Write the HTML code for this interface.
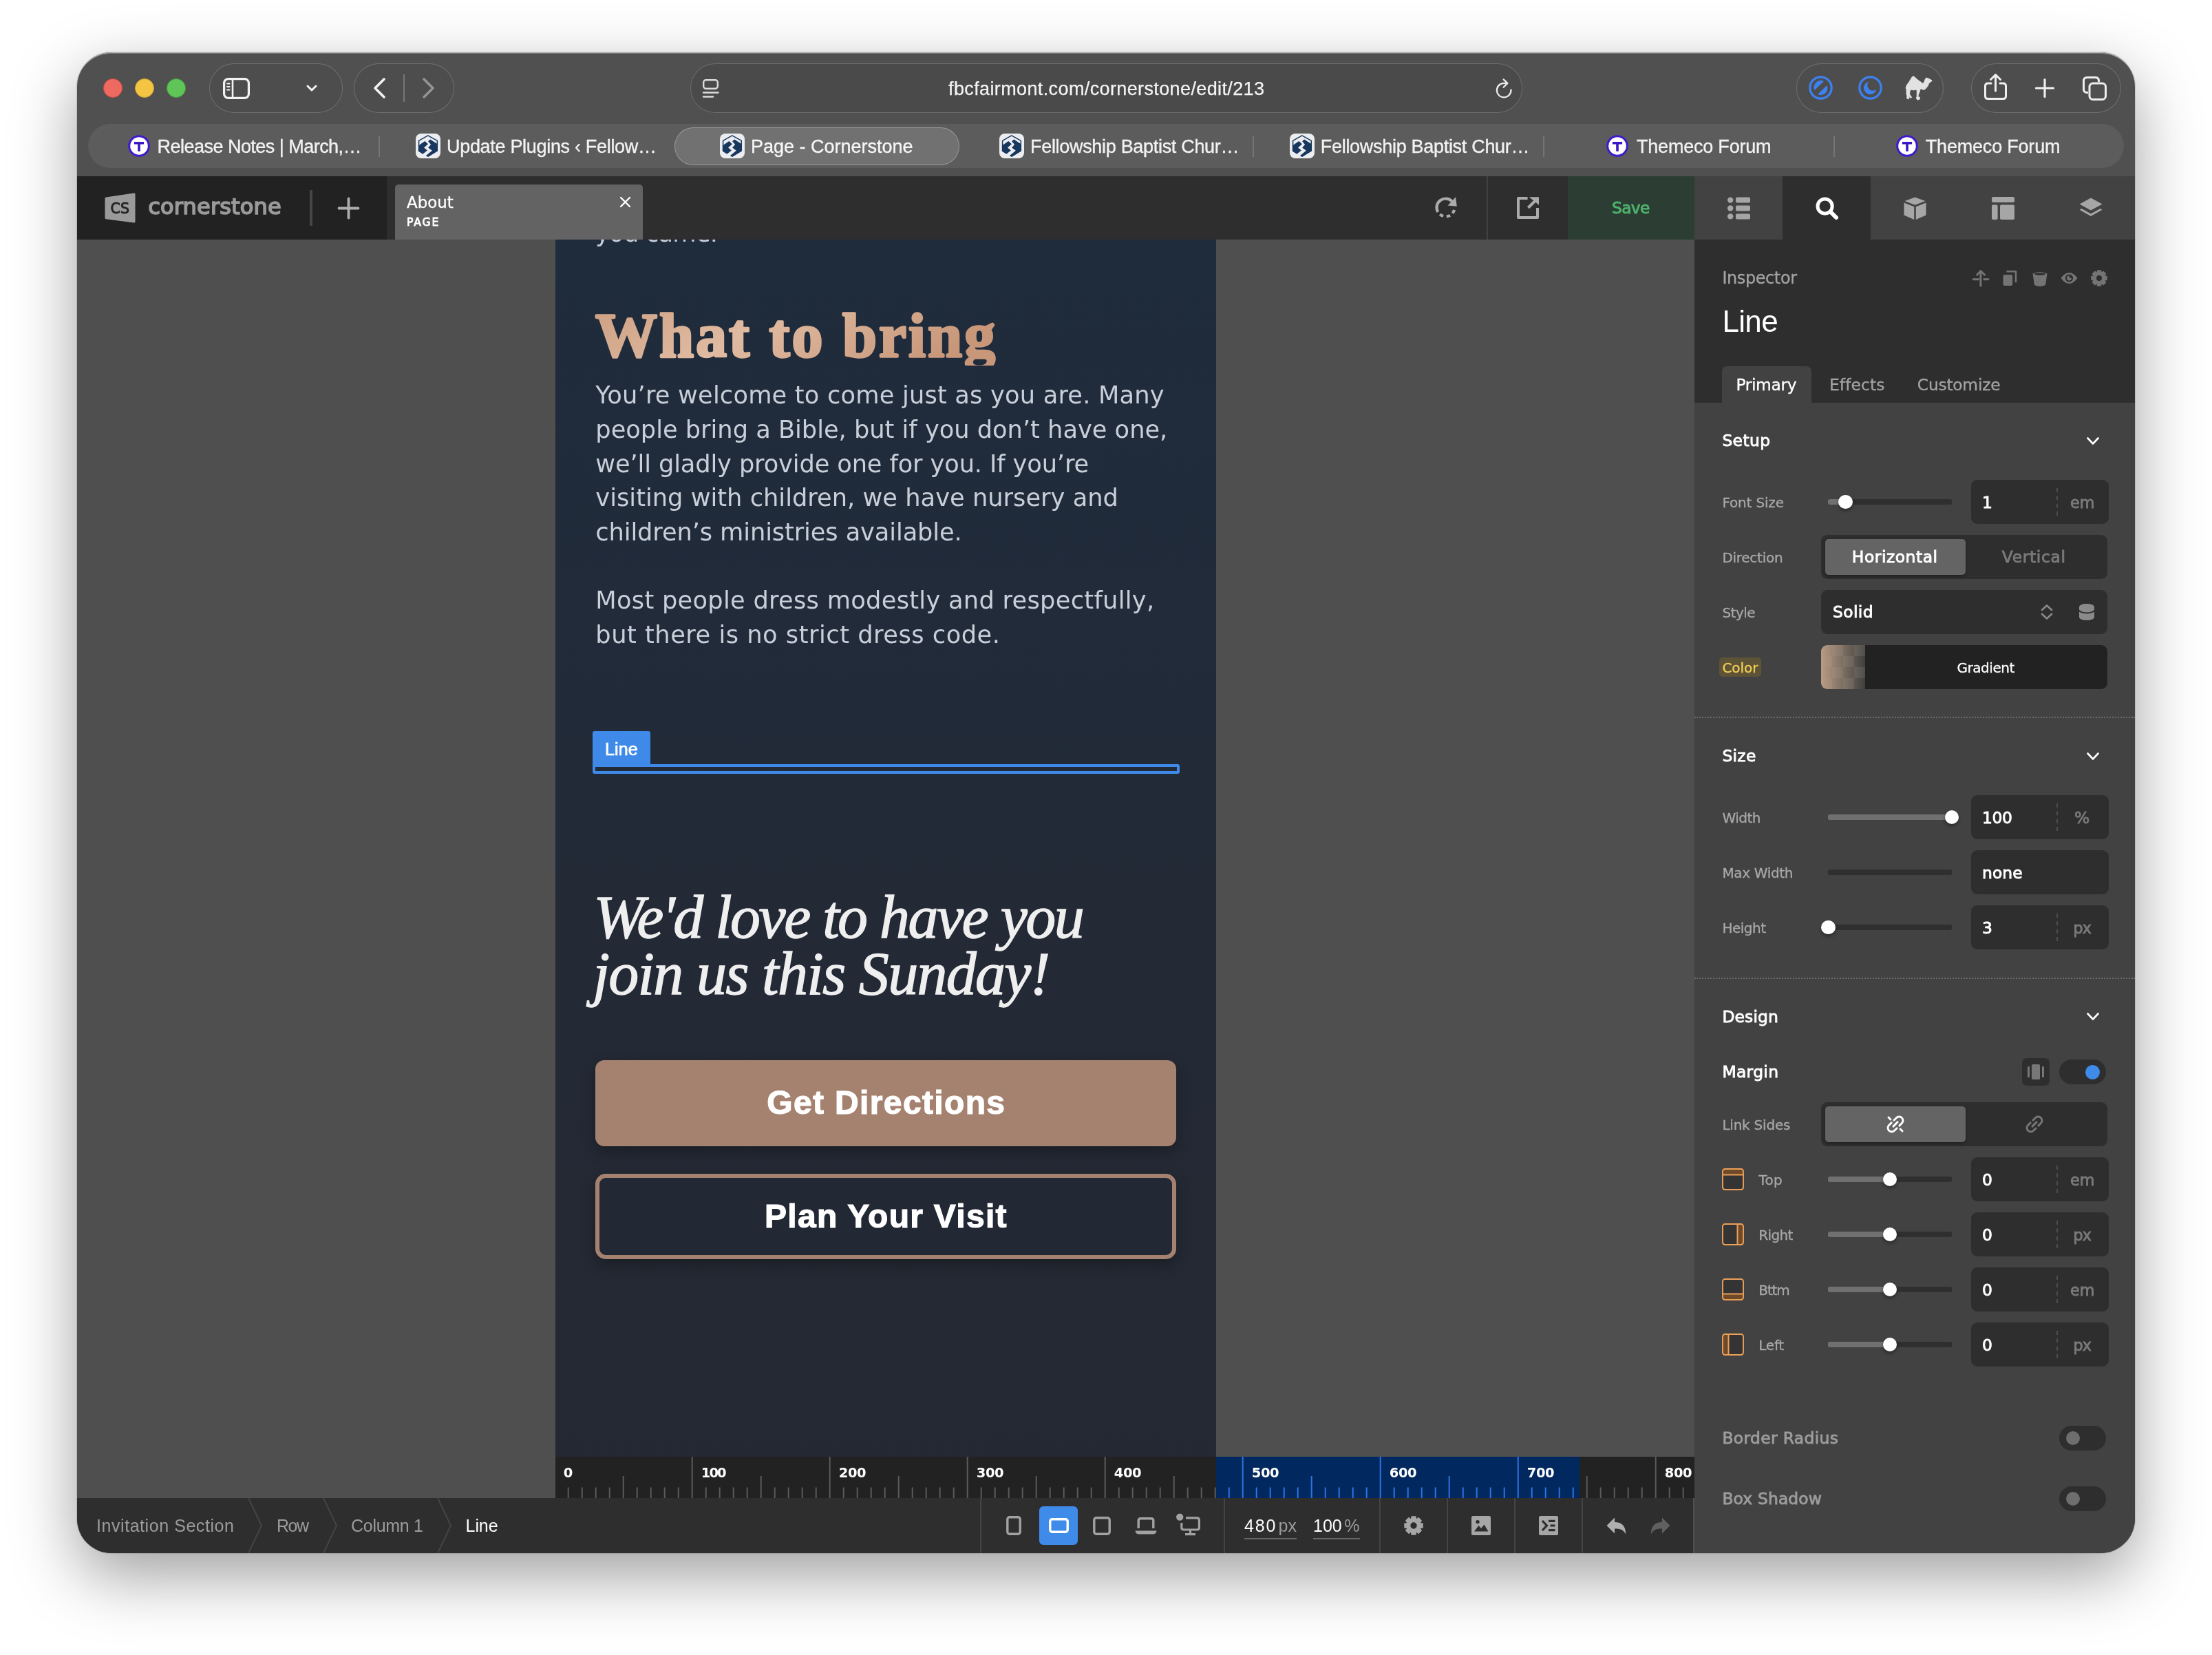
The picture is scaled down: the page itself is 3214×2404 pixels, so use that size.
<!DOCTYPE html>
<html lang="en"><head><meta charset="utf-8"><title>Page - Cornerstone</title>
<style>
html,body{margin:0;padding:0;background:#fff;}
body{width:3214px;height:2404px;position:relative;overflow:hidden;font-family:'Liberation Sans',sans-serif;}
.a{position:absolute;box-sizing:border-box;}
.t{position:absolute;white-space:pre;line-height:1;}
#shadow{position:absolute;left:112px;top:76px;width:2990px;height:2180px;border-radius:50px;box-shadow:0 33px 94px rgba(0,0,0,0.38),0 0 2px rgba(0,0,0,0.4);}
#win{position:absolute;left:112px;top:76px;width:2990px;height:2180px;border-radius:50px;overflow:hidden;background:#505050;}
#o{will-change:transform;position:absolute;left:-112px;top:-76px;width:3214px;height:2404px;}
svg{overflow:visible;}
#edge,#edge2{position:absolute;left:112px;top:76px;width:2990px;height:400px;border-radius:50px 50px 0 0;border-top:1px solid rgba(225,225,225,0.68);box-sizing:border-box;pointer-events:none;}
#edge2{top:77px;border-top-color:rgba(225,225,225,0.28);border-radius:49px 49px 0 0;}
</style></head><body>
<div id="shadow"></div>
<div id="win"><div id="o">
<div class="a" style="left:112.0px;top:76.0px;width:2990.0px;height:180.0px;background:#505050;"></div>
<div class="a" style="left:150.0px;top:113.8px;width:28.4px;height:28.4px;background:#ee6a60;border-radius:50%;border:1px solid #d24e45;"></div>
<div class="a" style="left:196.0px;top:113.8px;width:28.4px;height:28.4px;background:#f4c443;border-radius:50%;border:1px solid #d2a233;"></div>
<div class="a" style="left:242.0px;top:113.8px;width:28.4px;height:28.4px;background:#5fc556;border-radius:50%;border:1px solid #45a341;"></div>
<div class="a" style="left:304.0px;top:92.0px;width:194.0px;height:71.5px;border-radius:36px;border:1.5px solid rgba(255,255,255,0.19);background:rgba(0,0,0,0.035);"></div>
<div class="a" style="left:514.0px;top:92.0px;width:146.0px;height:71.5px;border-radius:36px;border:1.5px solid rgba(255,255,255,0.19);background:rgba(0,0,0,0.035);"></div>
<div class="a" style="left:1002.5px;top:92.0px;width:1209.5px;height:71.5px;border-radius:36px;border:1.5px solid rgba(255,255,255,0.19);background:#4a4a4a;"></div>
<div class="a" style="left:2610.0px;top:92.0px;width:214.0px;height:71.5px;border-radius:36px;border:1.5px solid rgba(255,255,255,0.19);background:rgba(0,0,0,0.035);"></div>
<div class="a" style="left:2864.0px;top:92.0px;width:218.0px;height:71.5px;border-radius:36px;border:1.5px solid rgba(255,255,255,0.19);background:rgba(0,0,0,0.035);"></div>
<svg class="a" style="left:324.0px;top:112.5px;" width="39" height="31" viewBox="0 0 39 31"><rect x="1.6" y="1.6" width="35.8" height="27.8" rx="6" fill="none" stroke="#f2f2f2" stroke-width="3.2"/><line x1="14" y1="2" x2="14" y2="29" stroke="#f2f2f2" stroke-width="2.6"/><g stroke="#f2f2f2" stroke-width="2" stroke-linecap="round"><line x1="6" y1="8.5" x2="9.5" y2="8.5"/><line x1="6" y1="13" x2="9.5" y2="13"/><line x1="6" y1="17.5" x2="9.5" y2="17.5"/></g></svg>
<svg class="a" style="left:445.0px;top:122.0px;" width="16" height="12" viewBox="0 0 16 12"><path d="M2 3 L8 9 L14 3" fill="none" stroke="#f2f2f2" stroke-width="3" stroke-linecap="round" stroke-linejoin="round"/></svg>
<svg class="a" style="left:541.0px;top:112.0px;" width="20" height="32" viewBox="0 0 20 32"><path d="M17 3 L4 16 L17 29" fill="none" stroke="#f4f4f4" stroke-width="3.6" stroke-linecap="round" stroke-linejoin="round"/></svg>
<div class="a" style="left:586.3px;top:108.0px;width:1.6px;height:40.0px;background:#777;"></div>
<svg class="a" style="left:613.0px;top:112.0px;" width="20" height="32" viewBox="0 0 20 32"><path d="M3 3 L16 16 L3 29" fill="none" stroke="#949494" stroke-width="3.6" stroke-linecap="round" stroke-linejoin="round"/></svg>
<svg class="a" style="left:1021.0px;top:115.0px;" width="24" height="28" viewBox="0 0 24 28"><rect x="1.2" y="1.2" width="20.6" height="12.6" rx="3.5" fill="none" stroke="#dcdcdc" stroke-width="2.4"/><line x1="1" y1="19.5" x2="22.5" y2="19.5" stroke="#dcdcdc" stroke-width="2.4" stroke-linecap="round"/><line x1="1" y1="25.5" x2="15" y2="25.5" stroke="#dcdcdc" stroke-width="2.4" stroke-linecap="round"/></svg>
<span class="t" style="left:1378.0px;top:115.8px;font-size:27px;color:#f4f4f4;letter-spacing:0.38px;-webkit-text-stroke:0.25px #f4f4f4;">fbcfairmont.com/cornerstone/edit/213</span>
<svg class="a" style="left:2172.0px;top:108.0px;" width="28" height="36" viewBox="0 0 28 36"><path d="M23.47 22.38 A10.3 10.3 0 1 1 15.87 13.15" fill="none" stroke="#ededed" stroke-width="2.25" stroke-linecap="round"/><path d="M12.6 7.4 L18.4 12.9 L12.6 18.8" fill="none" stroke="#ededed" stroke-width="2.25" stroke-linecap="round" stroke-linejoin="round"/></svg>
<svg class="a" style="left:2628.2px;top:110.2px;" width="35" height="35" viewBox="0 0 35 35"><circle cx="17.5" cy="17.5" r="15.7" fill="none" stroke="#3d82f3" stroke-width="3.2"/><path d="M8.5 21 A10 10 0 0 1 22 8 Z" fill="#3d82f3"/><path d="M26.5 14 A10 10 0 0 1 13 27 Z" fill="#3d82f3"/></svg>
<svg class="a" style="left:2699.5px;top:110.2px;" width="35" height="35" viewBox="0 0 35 35"><circle cx="17.5" cy="17.5" r="15.7" fill="none" stroke="#3d82f3" stroke-width="3.2"/><path d="M15.5 8.5 A9.3 9.3 0 1 0 26.5 19.5 A7.6 7.6 0 0 1 15.5 8.5 Z" fill="#3d82f3"/></svg>
<svg class="a" style="left:2755.0px;top:100.0px;" width="70" height="55" viewBox="0 0 70 55"><polygon points="24.9,10.8 27,11.8 29.2,14.0 33.2,17.3 36.5,19.5 39.2,21.6 40.9,18.6 42.5,14.3 44.5,13.0 48,14.6 51.8,16.6 52.2,17.6 49.9,18.9 47.5,21.6 45.9,25.3 42.9,28.9 39.9,30.6 36.2,28.9 34.9,29.9 34.2,33.2 32.9,36.6 31.9,39.9 34.6,41.5 34.2,44.2 31.2,45.2 29.2,43.2 30.2,39.9 30.2,33.2 29.9,30.2 25.3,30.9 21.3,30.1 19.9,33.2 19.6,36.6 21.6,39.9 22.9,41.5 20.6,42.2 17.9,39.2 17.3,37.6 18.9,42.2 17.9,44.2 15.3,42.5 16,39.9 15,36.6 15,29.9 14,27.9 15.6,23.3 18.6,19.3 21.3,15 23.3,11.6" fill="#e2e2e2" stroke="#e2e2e2" stroke-width="0.8" stroke-linejoin="round"/></svg>
<svg class="a" style="left:2880.0px;top:106.0px;" width="40" height="42" viewBox="0 0 40 42"><path d="M13 15 H8.5 Q4.5 15 4.5 19 V33.5 Q4.5 37.5 8.5 37.5 H30.5 Q34.5 37.5 34.5 33.5 V19 Q34.5 15 30.5 15 H26" fill="none" stroke="#efefef" stroke-width="3" stroke-linecap="round"/><path d="M19.5 26 V3.5 M12.5 9.5 L19.5 2.5 L26.5 9.5" fill="none" stroke="#efefef" stroke-width="3" stroke-linecap="round" stroke-linejoin="round"/></svg>
<svg class="a" style="left:2956.6px;top:113.7px;" width="28" height="28" viewBox="0 0 28 28"><path d="M14 1.5 V26.5 M1.5 14 H26.5" stroke="#efefef" stroke-width="3.2" stroke-linecap="round"/></svg>
<svg class="a" style="left:3026.0px;top:110.5px;" width="35" height="35" viewBox="0 0 35 35"><path d="M8 23.5 H6.5 Q1.5 23.5 1.5 18.5 V6.5 Q1.5 1.5 6.5 1.5 H18.5 Q23.5 1.5 23.5 6.5 V8" fill="none" stroke="#efefef" stroke-width="3"/><rect x="10" y="10" width="23.5" height="23.5" rx="5" fill="#505050" stroke="#efefef" stroke-width="3"/></svg>
<div class="a" style="left:128.0px;top:180.0px;width:2958.0px;height:64.0px;background:#5c5c5c;border-radius:32px;"></div>
<div class="a" style="left:980.0px;top:184.5px;width:414.0px;height:55.0px;background:#717171;border-radius:28px;border:1.5px solid rgba(255,255,255,0.28);"></div>
<div class="a" style="left:550.0px;top:197.0px;width:2.0px;height:30.5px;background:#757575;"></div>
<div class="a" style="left:1820.0px;top:197.0px;width:2.0px;height:30.5px;background:#757575;"></div>
<div class="a" style="left:2242.2px;top:197.0px;width:2.0px;height:30.5px;background:#757575;"></div>
<div class="a" style="left:2664.0px;top:197.0px;width:2.0px;height:30.5px;background:#757575;"></div>
<svg class="a" style="left:185.5px;top:196.0px;" width="32" height="32" viewBox="0 0 32 32"><circle cx="16" cy="16" r="14.3" fill="#fff" stroke="#3f1bcc" stroke-width="3"/><rect x="8.9" y="10" width="14.2" height="3.5" fill="#3a16c4"/><rect x="14.2" y="10" width="3.6" height="13.8" fill="#3a16c4"/></svg>
<span class="t" style="left:228.6px;top:200.0px;font-size:27px;color:#f2f2f2;letter-spacing:-0.53px;-webkit-text-stroke:0.35px #f2f2f2;">Release Notes | March,…</span>
<svg class="a" style="left:604.0px;top:194.0px;" width="36" height="36" viewBox="0 0 36 36"><rect x="0" y="0" width="36" height="36" rx="8" fill="#ecedf0"/><path d="M4.6 25.5 V10.4 L17.8 2.9 L31.3 10.4 V25.5" fill="none" stroke="#17375e" stroke-width="1.5" stroke-linejoin="round"/><polygon points="3.9,17.4 13.3,10.9 17.9,15.3 12.1,20.5 16.9,24.6 10.3,29.8 3.9,25.8" fill="#17375e"/><polygon points="21.1,8.5 32,15.6 32,25.5 18.1,34 14.8,32.2 23.9,24.8 18.1,20.4 22.1,15.9 18.1,11.3" fill="#17375e"/></svg>
<span class="t" style="left:649.0px;top:200.0px;font-size:27px;color:#f2f2f2;letter-spacing:-0.31px;-webkit-text-stroke:0.35px #f2f2f2;">Update Plugins ‹ Fellow…</span>
<svg class="a" style="left:1046.0px;top:194.0px;" width="36" height="36" viewBox="0 0 36 36"><rect x="0" y="0" width="36" height="36" rx="8" fill="#ecedf0"/><path d="M4.6 25.5 V10.4 L17.8 2.9 L31.3 10.4 V25.5" fill="none" stroke="#17375e" stroke-width="1.5" stroke-linejoin="round"/><polygon points="3.9,17.4 13.3,10.9 17.9,15.3 12.1,20.5 16.9,24.6 10.3,29.8 3.9,25.8" fill="#17375e"/><polygon points="21.1,8.5 32,15.6 32,25.5 18.1,34 14.8,32.2 23.9,24.8 18.1,20.4 22.1,15.9 18.1,11.3" fill="#17375e"/></svg>
<span class="t" style="left:1091.0px;top:200.0px;font-size:27px;color:#f7f7f7;letter-spacing:-0.01px;-webkit-text-stroke:0.35px #f2f2f2;">Page - Cornerstone</span>
<svg class="a" style="left:1452.0px;top:194.0px;" width="36" height="36" viewBox="0 0 36 36"><rect x="0" y="0" width="36" height="36" rx="8" fill="#ecedf0"/><path d="M4.6 25.5 V10.4 L17.8 2.9 L31.3 10.4 V25.5" fill="none" stroke="#17375e" stroke-width="1.5" stroke-linejoin="round"/><polygon points="3.9,17.4 13.3,10.9 17.9,15.3 12.1,20.5 16.9,24.6 10.3,29.8 3.9,25.8" fill="#17375e"/><polygon points="21.1,8.5 32,15.6 32,25.5 18.1,34 14.8,32.2 23.9,24.8 18.1,20.4 22.1,15.9 18.1,11.3" fill="#17375e"/></svg>
<span class="t" style="left:1497.0px;top:200.0px;font-size:27px;color:#f2f2f2;letter-spacing:-0.31px;-webkit-text-stroke:0.35px #f2f2f2;">Fellowship Baptist Chur…</span>
<svg class="a" style="left:1874.0px;top:194.0px;" width="36" height="36" viewBox="0 0 36 36"><rect x="0" y="0" width="36" height="36" rx="8" fill="#ecedf0"/><path d="M4.6 25.5 V10.4 L17.8 2.9 L31.3 10.4 V25.5" fill="none" stroke="#17375e" stroke-width="1.5" stroke-linejoin="round"/><polygon points="3.9,17.4 13.3,10.9 17.9,15.3 12.1,20.5 16.9,24.6 10.3,29.8 3.9,25.8" fill="#17375e"/><polygon points="21.1,8.5 32,15.6 32,25.5 18.1,34 14.8,32.2 23.9,24.8 18.1,20.4 22.1,15.9 18.1,11.3" fill="#17375e"/></svg>
<span class="t" style="left:1918.8px;top:200.0px;font-size:27px;color:#f2f2f2;letter-spacing:-0.30px;-webkit-text-stroke:0.35px #f2f2f2;">Fellowship Baptist Chur…</span>
<svg class="a" style="left:2334.3px;top:196.0px;" width="32" height="32" viewBox="0 0 32 32"><circle cx="16" cy="16" r="14.3" fill="#fff" stroke="#3f1bcc" stroke-width="3"/><rect x="8.9" y="10" width="14.2" height="3.5" fill="#3a16c4"/><rect x="14.2" y="10" width="3.6" height="13.8" fill="#3a16c4"/></svg>
<span class="t" style="left:2378.0px;top:200.0px;font-size:27px;color:#f2f2f2;letter-spacing:-0.21px;-webkit-text-stroke:0.35px #f2f2f2;">Themeco Forum</span>
<svg class="a" style="left:2754.7px;top:196.0px;" width="32" height="32" viewBox="0 0 32 32"><circle cx="16" cy="16" r="14.3" fill="#fff" stroke="#3f1bcc" stroke-width="3"/><rect x="8.9" y="10" width="14.2" height="3.5" fill="#3a16c4"/><rect x="14.2" y="10" width="3.6" height="13.8" fill="#3a16c4"/></svg>
<span class="t" style="left:2797.8px;top:200.0px;font-size:27px;color:#f2f2f2;letter-spacing:-0.20px;-webkit-text-stroke:0.35px #f2f2f2;">Themeco Forum</span>
<div class="a" style="left:112.0px;top:256.0px;width:450.0px;height:92.0px;background:#222222;"></div>
<div class="a" style="left:562.0px;top:256.0px;width:1900.0px;height:92.0px;background:#2e2e2e;"></div>
<svg class="a" style="left:151.5px;top:280.0px;" width="45" height="44" viewBox="0 0 45 44"><path d="M2 6.5 Q0.5 6.8 0.5 8.5 V36.5 Q0.5 38 2 38.3 L42.5 43.6 Q44.5 43.8 44.5 42 V2 Q44.5 0.2 42.5 0.5 Z" fill="#9a9a9a"/></svg>
<span class="t" style="left:160.6px;top:292.8px;font-size:20.5px;color:#242424;font-family:'DejaVu Sans','Liberation Sans',sans-serif;letter-spacing:0.07px;-webkit-text-stroke:0.9px #242424;">CS</span>
<span class="t" style="left:215.3px;top:284.2px;font-size:32px;color:#9a9a9a;font-family:'DejaVu Sans','Liberation Sans',sans-serif;letter-spacing:0.18px;-webkit-text-stroke:1.7px #9a9a9a;">cornerstone</span>
<div class="a" style="left:449.7px;top:276.0px;width:4.0px;height:52.0px;background:#464646;"></div>
<svg class="a" style="left:490.5px;top:286.5px;" width="31" height="31" viewBox="0 0 31 31"><path d="M15.5 1.5 V29.5 M1.5 15.5 H29.5" stroke="#adadad" stroke-width="3.8" stroke-linecap="round"/></svg>
<div class="a" style="left:574.0px;top:268.0px;width:360.0px;height:80.0px;background:#636363;border-radius:5px 5px 0 0;"></div>
<span class="t" style="left:591.0px;top:282.6px;font-size:22.91px;color:#ffffff;font-family:'DejaVu Sans','Liberation Sans',sans-serif;letter-spacing:-0.01px;-webkit-text-stroke:0.3px #ffffff;">About</span>
<span class="t" style="left:591.0px;top:316.4px;font-size:15.6px;color:#ffffff;font-family:'DejaVu Sans','Liberation Sans',sans-serif;letter-spacing:1.85px;-webkit-text-stroke:0.85px #ffffff;">PAGE</span>
<svg class="a" style="left:899.7px;top:284.8px;" width="17" height="17" viewBox="0 0 17 17"><path d="M2 2 L15 15 M15 2 L2 15" stroke="#fff" stroke-width="2.4" stroke-linecap="round"/></svg>
<svg class="a" style="left:2083.7px;top:285.1px;" width="33" height="33" viewBox="0 0 33 33"><path d="M5.24 23.00 A13 13 0 0 1 26.16 7.80" fill="none" stroke="#ababab" stroke-width="4.2"/><polygon points="31,1.2 32.8,14.7 19.7,13.4" fill="#ababab"/><path d="M29.06 19.86 A13 13 0 0 1 5.24 23.00" fill="none" stroke="#ababab" stroke-width="4.2" stroke-dasharray="5.5 4.7"/></svg>
<div class="a" style="left:2160.0px;top:256.0px;width:2.0px;height:92.0px;background:#414141;"></div>
<svg class="a" style="left:2204.0px;top:286.0px;" width="32" height="32" viewBox="0 0 32 32"><path d="M15.6 2 H2 V30 H30 V16" fill="none" stroke="#ababab" stroke-width="4" stroke-linejoin="round"/><polygon points="17.8,0.2 32,0.2 32,11.8" fill="#ababab"/><path d="M28 4.2 L16.4 15.8" stroke="#ababab" stroke-width="4.2"/></svg>
<div class="a" style="left:2277.6px;top:256.0px;width:184.4px;height:92.0px;background:#2c3e33;"></div>
<span class="t" style="left:2342.0px;top:290.5px;font-size:23.4px;color:#4fb26d;font-family:'DejaVu Sans','Liberation Sans',sans-serif;letter-spacing:-0.71px;-webkit-text-stroke:0.85px #4fb26d;">Save</span>
<div class="a" style="left:2462.0px;top:256.0px;width:640.0px;height:92.0px;background:#424242;"></div>
<div class="a" style="left:2590.0px;top:256.0px;width:128.0px;height:92.0px;background:#2e2e2e;"></div>
<svg class="a" style="left:2509.5px;top:286.0px;" width="33" height="33" viewBox="0 0 33 33"><g fill="#a6a6a6"><circle cx="4.2" cy="4.6" r="4.2"/><circle cx="4.2" cy="16.5" r="4.2"/><circle cx="4.2" cy="28.4" r="4.2"/><rect x="12" y="0.6" width="21" height="8" rx="2"/><rect x="12" y="12.5" width="21" height="8" rx="2"/><rect x="12" y="24.4" width="21" height="8" rx="2"/></g></svg>
<svg class="a" style="left:2637.5px;top:286.0px;" width="33" height="33" viewBox="0 0 33 33"><circle cx="13.6" cy="13.6" r="10.6" fill="none" stroke="#fff" stroke-width="5"/><path d="M21.5 21.5 L30 30" stroke="#fff" stroke-width="6" stroke-linecap="round"/></svg>
<svg class="a" style="left:2765.5px;top:285.5px;" width="33" height="34" viewBox="0 0 33 34"><g fill="#a6a6a6"><path d="M16.5 0.5 L31.5 6 L16.5 11.8 L1.5 6 Z"/><path d="M0.5 8.4 L15.2 14.2 V33 L0.5 26.6 Z"/><path d="M32.5 8.4 L17.8 14.2 V33 L32.5 26.6 Z"/></g></svg>
<svg class="a" style="left:2893.5px;top:286.0px;" width="33" height="33" viewBox="0 0 33 33"><g fill="#a6a6a6"><rect x="0" y="0" width="33" height="8" rx="2"/><rect x="0" y="11.5" width="8.6" height="21.5" rx="2"/><rect x="12" y="11.5" width="21" height="21.5" rx="2"/></g></svg>
<svg class="a" style="left:3021.0px;top:287.0px;" width="34" height="30" viewBox="0 0 34 30"><path d="M17 0.5 L33.5 9.5 L17 18.5 L0.5 9.5 Z" fill="#a6a6a6"/><path d="M3.5 16 L0.5 17.8 L17 27 L33.5 17.8 L30.5 16 L17 23.4 Z" fill="#a6a6a6"/></svg>
<div class="a" style="left:112.0px;top:348.0px;width:2350.0px;height:1828.0px;background:#4f4f4f;"></div>
<div class="a" style="left:807.0px;top:348.0px;width:960.0px;height:1768.0px;background:linear-gradient(180deg,#1f2c3c 0%,#212b3a 30%,#232a36 55%,#242832 100%);"></div>
<div class="a" style="left:807px;top:348px;width:960px;height:40px;overflow:hidden;">
<span class="t" style="left:58.0px;top:-26.7px;font-size:35.2px;color:#c9cfd9;font-family:'DejaVu Sans','Liberation Sans',sans-serif;letter-spacing:-0.73px;">you came.</span>
</div>
<svg class="a" style="left:854.5px;top:427.5px;overflow:hidden" width="621" height="103.0"><defs><linearGradient id="hg" x1="0" x2="1" y1="0" y2="0.25"><stop offset="0" stop-color="#cd9f82"/><stop offset="0.45" stop-color="#e0bba1"/><stop offset="1" stop-color="#c8977a"/></linearGradient></defs><text x="10" y="90" font-family="Liberation Serif,serif" font-size="90" font-weight="700" font-style="normal" letter-spacing="2.99" fill="url(#hg)" stroke="url(#hg)" stroke-width="3.4" stroke-linejoin="round">What to bring</text></svg>
<span class="t" style="left:865.3px;top:556.0px;font-size:35.2px;color:#c9cfd9;font-family:'DejaVu Sans','Liberation Sans',sans-serif;letter-spacing:0.20px;">You’re welcome to come just as you are. Many</span>
<span class="t" style="left:865.3px;top:605.8px;font-size:35.2px;color:#c9cfd9;font-family:'DejaVu Sans','Liberation Sans',sans-serif;">people bring a Bible, but if you don’t have one,</span>
<span class="t" style="left:865.3px;top:655.5px;font-size:35.2px;color:#c9cfd9;font-family:'DejaVu Sans','Liberation Sans',sans-serif;letter-spacing:-0.12px;">we’ll gladly provide one for you. If you’re</span>
<span class="t" style="left:865.3px;top:705.2px;font-size:35.2px;color:#c9cfd9;font-family:'DejaVu Sans','Liberation Sans',sans-serif;letter-spacing:0.03px;">visiting with children, we have nursery and</span>
<span class="t" style="left:865.3px;top:755.0px;font-size:35.2px;color:#c9cfd9;font-family:'DejaVu Sans','Liberation Sans',sans-serif;letter-spacing:-0.10px;">children’s ministries available.</span>
<span class="t" style="left:865.3px;top:854.4px;font-size:35.2px;color:#c9cfd9;font-family:'DejaVu Sans','Liberation Sans',sans-serif;letter-spacing:0.29px;">Most people dress modestly and respectfully,</span>
<span class="t" style="left:865.3px;top:904.2px;font-size:35.2px;color:#c9cfd9;font-family:'DejaVu Sans','Liberation Sans',sans-serif;letter-spacing:0.52px;">but there is no strict dress code.</span>
<div class="a" style="left:861.0px;top:1062.0px;width:84.0px;height:50.0px;background:#3f8ae8;border-radius:3px 3px 0 0;"></div>
<span class="t" style="left:879.0px;top:1075.5px;font-size:25px;color:#fff;letter-spacing:0.11px;-webkit-text-stroke:0.7px #fff;">Line</span>
<div class="a" style="left:861.0px;top:1110.0px;width:852.5px;height:14.0px;border-radius:3px;border:4px solid #3f8ae8;"></div>
<span class="t" style="left:862.6px;top:1289.0px;font-size:88px;color:#efefef;font-family:'Liberation Serif',serif;font-style:italic;letter-spacing:-2.51px;-webkit-text-stroke:1.3px #efefef;">We&#x27;d love to have you</span>
<span class="t" style="left:861.5px;top:1371.3px;font-size:88px;color:#efefef;font-family:'Liberation Serif',serif;font-style:italic;letter-spacing:-1.69px;-webkit-text-stroke:1.3px #efefef;">join us this Sunday!</span>
<div class="a" style="left:865.3px;top:1540.0px;width:843.4px;height:124.7px;background:#a5826f;border-radius:13px;box-shadow:0 8px 20px rgba(0,0,0,0.28);"></div>
<span class="t" style="left:1114.3px;top:1578.0px;font-size:48px;color:#fff;font-weight:700;letter-spacing:1.36px;-webkit-text-stroke:1.2px #fff;">Get Directions</span>
<div class="a" style="left:865.3px;top:1705.0px;width:843.4px;height:123.6px;background:#222935;border-radius:15px;border:6px solid #a5826f;box-shadow:0 8px 20px rgba(0,0,0,0.28);"></div>
<span class="t" style="left:1111.0px;top:1743.4px;font-size:48px;color:#fff;font-weight:700;letter-spacing:1.29px;-webkit-text-stroke:1.2px #fff;">Plan Your Visit</span>
<div class="a" style="left:807.0px;top:2116.0px;width:1655.0px;height:60.0px;background:#222222;"></div>
<div class="a" style="left:1767.0px;top:2116.0px;width:528.3px;height:60.0px;background:#01285f;"></div>
<svg class="a" style="left:807.0px;top:2116.0px;" width="1655" height="60" viewBox="0 0 1655 60"><rect x="17.7" y="44.5" width="2" height="15.5" fill="#5a5a5a"/><rect x="37.7" y="44.5" width="2" height="15.5" fill="#5a5a5a"/><rect x="57.7" y="44.5" width="2" height="15.5" fill="#5a5a5a"/><rect x="77.7" y="44.5" width="2" height="15.5" fill="#5a5a5a"/><rect x="97.7" y="28" width="2" height="32" fill="#5a5a5a"/><rect x="117.7" y="44.5" width="2" height="15.5" fill="#5a5a5a"/><rect x="137.7" y="44.5" width="2" height="15.5" fill="#5a5a5a"/><rect x="157.7" y="44.5" width="2" height="15.5" fill="#5a5a5a"/><rect x="177.7" y="44.5" width="2" height="15.5" fill="#5a5a5a"/><rect x="197.7" y="0" width="2" height="60" fill="#5a5a5a"/><rect x="217.7" y="44.5" width="2" height="15.5" fill="#5a5a5a"/><rect x="237.7" y="44.5" width="2" height="15.5" fill="#5a5a5a"/><rect x="257.7" y="44.5" width="2" height="15.5" fill="#5a5a5a"/><rect x="277.7" y="44.5" width="2" height="15.5" fill="#5a5a5a"/><rect x="297.7" y="28" width="2" height="32" fill="#5a5a5a"/><rect x="317.7" y="44.5" width="2" height="15.5" fill="#5a5a5a"/><rect x="337.7" y="44.5" width="2" height="15.5" fill="#5a5a5a"/><rect x="357.7" y="44.5" width="2" height="15.5" fill="#5a5a5a"/><rect x="377.7" y="44.5" width="2" height="15.5" fill="#5a5a5a"/><rect x="397.7" y="0" width="2" height="60" fill="#5a5a5a"/><rect x="417.7" y="44.5" width="2" height="15.5" fill="#5a5a5a"/><rect x="437.7" y="44.5" width="2" height="15.5" fill="#5a5a5a"/><rect x="457.7" y="44.5" width="2" height="15.5" fill="#5a5a5a"/><rect x="477.7" y="44.5" width="2" height="15.5" fill="#5a5a5a"/><rect x="497.7" y="28" width="2" height="32" fill="#5a5a5a"/><rect x="517.7" y="44.5" width="2" height="15.5" fill="#5a5a5a"/><rect x="537.7" y="44.5" width="2" height="15.5" fill="#5a5a5a"/><rect x="557.7" y="44.5" width="2" height="15.5" fill="#5a5a5a"/><rect x="577.7" y="44.5" width="2" height="15.5" fill="#5a5a5a"/><rect x="597.7" y="0" width="2" height="60" fill="#5a5a5a"/><rect x="617.7" y="44.5" width="2" height="15.5" fill="#5a5a5a"/><rect x="637.7" y="44.5" width="2" height="15.5" fill="#5a5a5a"/><rect x="657.7" y="44.5" width="2" height="15.5" fill="#5a5a5a"/><rect x="677.7" y="44.5" width="2" height="15.5" fill="#5a5a5a"/><rect x="697.7" y="28" width="2" height="32" fill="#5a5a5a"/><rect x="717.7" y="44.5" width="2" height="15.5" fill="#5a5a5a"/><rect x="737.7" y="44.5" width="2" height="15.5" fill="#5a5a5a"/><rect x="757.7" y="44.5" width="2" height="15.5" fill="#5a5a5a"/><rect x="777.7" y="44.5" width="2" height="15.5" fill="#5a5a5a"/><rect x="797.7" y="0" width="2" height="60" fill="#5a5a5a"/><rect x="817.7" y="44.5" width="2" height="15.5" fill="#5a5a5a"/><rect x="837.7" y="44.5" width="2" height="15.5" fill="#5a5a5a"/><rect x="857.7" y="44.5" width="2" height="15.5" fill="#5a5a5a"/><rect x="877.7" y="44.5" width="2" height="15.5" fill="#5a5a5a"/><rect x="897.7" y="28" width="2" height="32" fill="#5a5a5a"/><rect x="917.7" y="44.5" width="2" height="15.5" fill="#5a5a5a"/><rect x="937.7" y="44.5" width="2" height="15.5" fill="#5a5a5a"/><rect x="957.7" y="44.5" width="2" height="15.5" fill="#5a5a5a"/><rect x="977.7" y="44.5" width="2" height="15.5" fill="#2f74e2"/><rect x="997.7" y="0" width="2" height="60" fill="#2f74e2"/><rect x="1017.7" y="44.5" width="2" height="15.5" fill="#2f74e2"/><rect x="1037.7" y="44.5" width="2" height="15.5" fill="#2f74e2"/><rect x="1057.7" y="44.5" width="2" height="15.5" fill="#2f74e2"/><rect x="1077.7" y="44.5" width="2" height="15.5" fill="#2f74e2"/><rect x="1097.7" y="28" width="2" height="32" fill="#2f74e2"/><rect x="1117.7" y="44.5" width="2" height="15.5" fill="#2f74e2"/><rect x="1137.7" y="44.5" width="2" height="15.5" fill="#2f74e2"/><rect x="1157.7" y="44.5" width="2" height="15.5" fill="#2f74e2"/><rect x="1177.7" y="44.5" width="2" height="15.5" fill="#2f74e2"/><rect x="1197.7" y="0" width="2" height="60" fill="#2f74e2"/><rect x="1217.7" y="44.5" width="2" height="15.5" fill="#2f74e2"/><rect x="1237.7" y="44.5" width="2" height="15.5" fill="#2f74e2"/><rect x="1257.7" y="44.5" width="2" height="15.5" fill="#2f74e2"/><rect x="1277.7" y="44.5" width="2" height="15.5" fill="#2f74e2"/><rect x="1297.7" y="28" width="2" height="32" fill="#2f74e2"/><rect x="1317.7" y="44.5" width="2" height="15.5" fill="#2f74e2"/><rect x="1337.7" y="44.5" width="2" height="15.5" fill="#2f74e2"/><rect x="1357.7" y="44.5" width="2" height="15.5" fill="#2f74e2"/><rect x="1377.7" y="44.5" width="2" height="15.5" fill="#2f74e2"/><rect x="1397.7" y="0" width="2" height="60" fill="#2f74e2"/><rect x="1417.7" y="44.5" width="2" height="15.5" fill="#2f74e2"/><rect x="1437.7" y="44.5" width="2" height="15.5" fill="#2f74e2"/><rect x="1457.7" y="44.5" width="2" height="15.5" fill="#2f74e2"/><rect x="1477.7" y="44.5" width="2" height="15.5" fill="#2f74e2"/><rect x="1497.7" y="28" width="2" height="32" fill="#5a5a5a"/><rect x="1517.7" y="44.5" width="2" height="15.5" fill="#5a5a5a"/><rect x="1537.7" y="44.5" width="2" height="15.5" fill="#5a5a5a"/><rect x="1557.7" y="44.5" width="2" height="15.5" fill="#5a5a5a"/><rect x="1577.7" y="44.5" width="2" height="15.5" fill="#5a5a5a"/><rect x="1597.7" y="0" width="2" height="60" fill="#5a5a5a"/><rect x="1617.7" y="44.5" width="2" height="15.5" fill="#5a5a5a"/><rect x="1637.7" y="44.5" width="2" height="15.5" fill="#5a5a5a"/></svg>
<div class="a" style="left:807px;top:2116px;width:1655px;height:60px;overflow:hidden;">
<span class="t" style="left:11.7px;top:14.0px;font-size:19.5px;color:#fff;font-family:'DejaVu Sans','Liberation Sans',sans-serif;font-weight:700;">0</span>
<span class="t" style="left:211.7px;top:14.0px;font-size:19.5px;color:#fff;font-family:'DejaVu Sans','Liberation Sans',sans-serif;font-weight:700;letter-spacing:-1.86px;">100</span>
<span class="t" style="left:411.7px;top:14.0px;font-size:19.5px;color:#fff;font-family:'DejaVu Sans','Liberation Sans',sans-serif;font-weight:700;letter-spacing:-0.36px;">200</span>
<span class="t" style="left:611.7px;top:14.0px;font-size:19.5px;color:#fff;font-family:'DejaVu Sans','Liberation Sans',sans-serif;font-weight:700;letter-spacing:-0.36px;">300</span>
<span class="t" style="left:811.7px;top:14.0px;font-size:19.5px;color:#fff;font-family:'DejaVu Sans','Liberation Sans',sans-serif;font-weight:700;letter-spacing:-0.36px;">400</span>
<span class="t" style="left:1011.7px;top:14.0px;font-size:19.5px;color:#fff;font-family:'DejaVu Sans','Liberation Sans',sans-serif;font-weight:700;letter-spacing:-0.36px;">500</span>
<span class="t" style="left:1211.7px;top:14.0px;font-size:19.5px;color:#fff;font-family:'DejaVu Sans','Liberation Sans',sans-serif;font-weight:700;letter-spacing:-0.36px;">600</span>
<span class="t" style="left:1411.7px;top:14.0px;font-size:19.5px;color:#fff;font-family:'DejaVu Sans','Liberation Sans',sans-serif;font-weight:700;letter-spacing:-0.36px;">700</span>
<span class="t" style="left:1611.7px;top:14.0px;font-size:19.5px;color:#fff;font-family:'DejaVu Sans','Liberation Sans',sans-serif;font-weight:700;letter-spacing:-0.36px;">800</span>
</div>
<div class="a" style="left:112.0px;top:2176.0px;width:2348.0px;height:80.0px;background:#2e2e2e;"></div>
<span class="t" style="left:140.0px;top:2203.6px;font-size:25px;color:#9c9c9c;letter-spacing:0.56px;">Invitation Section</span>
<span class="t" style="left:402.0px;top:2203.6px;font-size:25px;color:#9c9c9c;letter-spacing:-1.51px;">Row</span>
<span class="t" style="left:510.0px;top:2203.6px;font-size:25px;color:#9c9c9c;letter-spacing:-0.29px;">Column 1</span>
<span class="t" style="left:676.6px;top:2203.6px;font-size:25px;color:#fff;letter-spacing:-0.09px;">Line</span>
<svg class="a" style="left:360.0px;top:2176.0px;" width="22" height="80" viewBox="0 0 22 80"><path d="M1 0 L20 40 L1 80" fill="none" stroke="#444" stroke-width="2"/></svg>
<svg class="a" style="left:468.6px;top:2176.0px;" width="22" height="80" viewBox="0 0 22 80"><path d="M1 0 L20 40 L1 80" fill="none" stroke="#444" stroke-width="2"/></svg>
<svg class="a" style="left:635.0px;top:2176.0px;" width="22" height="80" viewBox="0 0 22 80"><path d="M1 0 L20 40 L1 80" fill="none" stroke="#444" stroke-width="2"/></svg>
<div class="a" style="left:1423.5px;top:2176.0px;width:2.0px;height:80.0px;background:#444444;"></div>
<div class="a" style="left:1778.0px;top:2176.0px;width:2.0px;height:80.0px;background:#444444;"></div>
<div class="a" style="left:2003.7px;top:2176.0px;width:2.0px;height:80.0px;background:#444444;"></div>
<div class="a" style="left:2102.4px;top:2176.0px;width:2.0px;height:80.0px;background:#444444;"></div>
<div class="a" style="left:2200.0px;top:2176.0px;width:2.0px;height:80.0px;background:#444444;"></div>
<div class="a" style="left:2298.0px;top:2176.0px;width:2.0px;height:80.0px;background:#444444;"></div>
<svg class="a" style="left:1462.0px;top:2202.0px;" width="22" height="28" viewBox="0 0 22 28"><rect x="1.8" y="1.8" width="18.4" height="24.4" rx="3" fill="none" stroke="#a2a2a2" stroke-width="3.4"/></svg>
<div class="a" style="left:1510.0px;top:2188.0px;width:56.0px;height:56.0px;background:#3f8bea;border-radius:6px;"></div>
<svg class="a" style="left:1523.5px;top:2205.0px;" width="29" height="22" viewBox="0 0 29 22"><rect x="1.8" y="1.8" width="25.4" height="18.4" rx="3" fill="none" stroke="#fff" stroke-width="3.4"/></svg>
<svg class="a" style="left:1588.0px;top:2203.0px;" width="26" height="27" viewBox="0 0 26 27"><rect x="1.8" y="1.8" width="22.4" height="23.4" rx="3" fill="none" stroke="#a2a2a2" stroke-width="3.4"/></svg>
<svg class="a" style="left:1649.0px;top:2204.0px;" width="32" height="25" viewBox="0 0 32 25"><path d="M5.2 16 V5 Q5.2 1.8 8.4 1.8 H23.6 Q26.8 1.8 26.8 5 V16" fill="none" stroke="#a2a2a2" stroke-width="3.4"/><path d="M0.5 19.5 H31.5 Q31 24.5 26 24.5 H6 Q1 24.5 0.5 19.5 Z" fill="#a2a2a2"/></svg>
<svg class="a" style="left:1709.0px;top:2198.0px;" width="36" height="33" viewBox="0 0 36 33"><circle cx="5.2" cy="5.6" r="5.2" fill="#a2a2a2"/><path d="M14 6.8 H30 Q33.4 6.8 33.4 10 V21 Q33.4 24 30 24 H11 Q7.8 24 7.8 21 V14" fill="none" stroke="#a2a2a2" stroke-width="3.2"/><path d="M20.5 24 V30 M13 30.6 H28" stroke="#a2a2a2" stroke-width="3.2"/></svg>
<span class="t" style="left:1808.0px;top:2203.6px;font-size:25px;color:#fff;letter-spacing:1.89px;">480</span>
<span class="t" style="left:1857.5px;top:2203.6px;font-size:25px;color:#9c9c9c;letter-spacing:0.09px;">px</span>
<span class="t" style="left:1908.0px;top:2203.6px;font-size:25px;color:#fff;letter-spacing:-0.01px;">100</span>
<span class="t" style="left:1953.3px;top:2203.6px;font-size:25px;color:#9c9c9c;">%</span>
<div class="a" style="left:1808.0px;top:2234.0px;width:76.0px;height:2.0px;background:#686868;"></div>
<div class="a" style="left:1908.0px;top:2234.0px;width:68.0px;height:2.0px;background:#686868;"></div>
<svg class="a" style="left:2041.0px;top:2203.0px;" width="26" height="26" viewBox="0 0 26 26"><polygon points="9.95,3.60 10.36,0.27 15.64,0.27 16.05,3.60 17.49,4.20 20.14,2.13 23.87,5.86 21.80,8.51 22.40,9.95 25.73,10.36 25.73,15.64 22.40,16.05 21.80,17.49 23.87,20.14 20.14,23.87 17.49,21.80 16.05,22.40 15.64,25.73 10.36,25.73 9.95,22.40 8.51,21.80 5.86,23.87 2.13,20.14 4.20,17.49 3.60,16.05 0.27,15.64 0.27,10.36 3.60,9.95 4.20,8.51 2.13,5.86 5.86,2.13 8.51,4.20" fill="#a6a6a6" stroke="#a6a6a6" stroke-width="2" stroke-linejoin="round"/><circle cx="13" cy="13" r="4.7" fill="#2e2e2e"/></svg>
<svg class="a" style="left:2138.0px;top:2202.0px;" width="28" height="28" viewBox="0 0 28 28"><rect x="0" y="0" width="28" height="28" rx="2.5" fill="#a6a6a6"/><circle cx="9" cy="8.6" r="2.7" fill="#2e2e2e"/><path d="M4 22.5 L10.5 14 L14 18 L18.5 12.5 L24.5 22.5 Z" fill="#2e2e2e"/></svg>
<svg class="a" style="left:2236.0px;top:2202.0px;" width="28" height="28" viewBox="0 0 28 28"><rect x="0" y="0" width="28" height="28" rx="2.5" fill="#a6a6a6"/><path d="M5 7 L11.5 14 L5 21" fill="none" stroke="#2e2e2e" stroke-width="3.2"/><path d="M14 7.4 H23.5 M16.5 14 H23.5 M14 20.6 H23.5" stroke="#2e2e2e" stroke-width="3.2"/></svg>
<svg class="a" style="left:2334.0px;top:2204.0px;" width="29" height="26" viewBox="0 0 29 26"><path d="M12 0.5 V7 C22 7 28.5 12.5 28 24.5 C25 18 20 16.5 12 16.5 V23.5 L0.5 12 Z" fill="#b0b0b0"/></svg>
<svg class="a" style="left:2397.5px;top:2204.0px;" width="29" height="26" viewBox="0 0 29 26"><path d="M17 0.5 V7 C7 7 0.5 12.5 1 24.5 C4 18 9 16.5 17 16.5 V23.5 L28.5 12 Z" fill="#606060"/></svg>
<div class="a" style="left:2462.0px;top:348.0px;width:640.0px;height:1908.0px;background:#424242;"></div>
<div class="a" style="left:2462.0px;top:348.0px;width:640.0px;height:237.0px;background:#2e2e2e;"></div>
<span class="t" style="left:2502.4px;top:393.0px;font-size:23.89px;color:#a3a3a3;font-family:'DejaVu Sans','Liberation Sans',sans-serif;letter-spacing:-0.35px;-webkit-text-stroke:0.3px #a3a3a3;">Inspector</span>
<svg class="a" style="left:2866.0px;top:392.0px;" width="24" height="25" viewBox="0 0 24 25"><path d="M11.9 23.4 V2 M6.6 7.2 L11.9 1.6 L17.6 7.2" fill="none" stroke="#747474" stroke-width="2.9" stroke-linecap="round" stroke-linejoin="round"/><path d="M1.2 13.7 H9 M16.8 13.7 H23" stroke="#747474" stroke-width="2.9" stroke-linecap="round"/></svg>
<svg class="a" style="left:2910.0px;top:393.0px;" width="20" height="23" viewBox="0 0 20 23"><path d="M5.4 1.3 H19 V17.2" fill="none" stroke="#747474" stroke-width="2.6" stroke-linejoin="round"/><rect x="0.5" y="5.9" width="13.7" height="16" rx="2.2" fill="#747474"/></svg>
<svg class="a" style="left:2953.0px;top:393.5px;" width="22" height="22" viewBox="0 0 22 22"><path d="M0.5 3.5 Q11 -1.5 21.5 3.5 L19 20 Q11 24 3 20 Z" fill="#747474"/><ellipse cx="11" cy="4" rx="8" ry="1.8" fill="#2e2e2e"/></svg>
<svg class="a" style="left:2993.5px;top:394.0px;" width="25" height="20" viewBox="0 0 25 20"><path d="M0.5 10 Q12.5 -6 24.5 10 Q12.5 26 0.5 10 Z" fill="#747474"/><circle cx="12.5" cy="10" r="5.6" fill="#2e2e2e"/><circle cx="12.5" cy="10" r="3.4" fill="#747474"/><circle cx="14.3" cy="8.2" r="1.8" fill="#2e2e2e"/></svg>
<svg class="a" style="left:3039.0px;top:393.0px;" width="22" height="22" viewBox="0 0 22 22"><polygon points="8.42,3.05 8.77,0.23 13.23,0.23 13.58,3.05 14.80,3.55 17.04,1.81 20.19,4.96 18.45,7.20 18.95,8.42 21.77,8.77 21.77,13.23 18.95,13.58 18.45,14.80 20.19,17.04 17.04,20.19 14.80,18.45 13.58,18.95 13.23,21.77 8.77,21.77 8.42,18.95 7.20,18.45 4.96,20.19 1.81,17.04 3.55,14.80 3.05,13.58 0.23,13.23 0.23,8.77 3.05,8.42 3.55,7.20 1.81,4.96 4.96,1.81 7.20,3.55" fill="#747474" stroke="#747474" stroke-width="2" stroke-linejoin="round"/><circle cx="11" cy="11" r="4.0" fill="#2e2e2e"/></svg>
<span class="t" style="left:2502.4px;top:445.3px;font-size:44px;color:#fff;letter-spacing:-0.66px;">Line</span>
<div class="a" style="left:2502.0px;top:532.0px;width:130.0px;height:53.0px;background:#424242;border-radius:7px 7px 0 0;"></div>
<span class="t" style="left:2522.4px;top:548.0px;font-size:23.4px;color:#fff;font-family:'DejaVu Sans','Liberation Sans',sans-serif;letter-spacing:-0.37px;-webkit-text-stroke:0.3px #fff;">Primary</span>
<span class="t" style="left:2658.0px;top:548.0px;font-size:23.4px;color:#a3a3a3;font-family:'DejaVu Sans','Liberation Sans',sans-serif;letter-spacing:0.08px;-webkit-text-stroke:0.3px #a3a3a3;">Effects</span>
<span class="t" style="left:2785.8px;top:548.0px;font-size:23.4px;color:#a3a3a3;font-family:'DejaVu Sans','Liberation Sans',sans-serif;letter-spacing:-0.25px;-webkit-text-stroke:0.3px #a3a3a3;">Customize</span>
<span class="t" style="left:2502.4px;top:629.3px;font-size:23.4px;color:#fff;font-family:'DejaVu Sans','Liberation Sans',sans-serif;letter-spacing:0.38px;-webkit-text-stroke:0.85px #fff;">Setup</span>
<svg class="a" style="left:3032.0px;top:634.8px;" width="18" height="12" viewBox="0 0 18 12"><path d="M1.5 1.5 L9 9.5 L16.5 1.5" fill="none" stroke="#fff" stroke-width="2.6" stroke-linecap="round" stroke-linejoin="round"/></svg>
<span class="t" style="left:2502.4px;top:719.5px;font-size:19.99px;color:#a8a8a8;font-family:'DejaVu Sans','Liberation Sans',sans-serif;letter-spacing:-0.16px;-webkit-text-stroke:0.3px #a8a8a8;">Font Size</span>
<div class="a" style="left:2656.0px;top:725.0px;width:180.0px;height:8.0px;background:#2f2f2f;border-radius:2.5px;"></div>
<div class="a" style="left:2656.0px;top:725.0px;width:25.7px;height:8.0px;background:#707070;border-radius:2.5px;"></div>
<div class="a" style="left:2671.3px;top:718.7px;width:20.6px;height:20.6px;background:#fff;border-radius:50%;box-shadow:0 3px 5px rgba(0,0,0,0.35);"></div>
<div class="a" style="left:2864.2px;top:697.0px;width:199.8px;height:64.0px;background:#2e2e2e;border-radius:9px;"></div>
<span class="t" style="left:2880.0px;top:718.5px;font-size:23.4px;color:#fff;font-family:'DejaVu Sans','Liberation Sans',sans-serif;-webkit-text-stroke:0.85px #fff;">1</span>
<div class="a" style="left:2988.3px;top:709.0px;width:0.0px;height:40.0px;border-left:2px dashed #4c4c4c;"></div>
<span class="t" style="left:3008.0px;top:718.5px;font-size:22.2px;color:#7a7a7a;font-family:'DejaVu Sans','Liberation Sans',sans-serif;letter-spacing:0.13px;-webkit-text-stroke:0.85px #7a7a7a;">em</span>
<span class="t" style="left:2502.4px;top:799.5px;font-size:19.99px;color:#a8a8a8;font-family:'DejaVu Sans','Liberation Sans',sans-serif;letter-spacing:-0.26px;-webkit-text-stroke:0.3px #a8a8a8;">Direction</span>
<div class="a" style="left:2646.0px;top:777.0px;width:416.2px;height:64.0px;background:#2e2e2e;border-radius:9px;"></div>
<div class="a" style="left:2652.0px;top:783.3px;width:204.0px;height:51.3px;background:#646464;border-radius:5px;box-shadow:0 2px 4px rgba(0,0,0,0.3);"></div>
<span class="t" style="left:2690.8px;top:797.8px;font-size:23.4px;color:#fff;font-family:'DejaVu Sans','Liberation Sans',sans-serif;letter-spacing:0.53px;-webkit-text-stroke:0.85px #fff;">Horizontal</span>
<span class="t" style="left:2908.8px;top:797.8px;font-size:23.4px;color:#7a7a7a;font-family:'DejaVu Sans','Liberation Sans',sans-serif;letter-spacing:0.66px;-webkit-text-stroke:0.85px #7a7a7a;">Vertical</span>
<span class="t" style="left:2502.4px;top:879.5px;font-size:19.99px;color:#a8a8a8;font-family:'DejaVu Sans','Liberation Sans',sans-serif;letter-spacing:-0.48px;-webkit-text-stroke:0.3px #a8a8a8;">Style</span>
<div class="a" style="left:2646.0px;top:857.0px;width:416.2px;height:64.0px;background:#2e2e2e;border-radius:9px;"></div>
<span class="t" style="left:2662.9px;top:878.3px;font-size:23.4px;color:#fff;font-family:'DejaVu Sans','Liberation Sans',sans-serif;letter-spacing:0.42px;-webkit-text-stroke:0.85px #fff;">Solid</span>
<svg class="a" style="left:2965.0px;top:878.0px;" width="18" height="22" viewBox="0 0 18 22"><path d="M2 8 L9 1.5 L16 8 M2 14 L9 20.5 L16 14" fill="none" stroke="#8a8a8a" stroke-width="2.6" stroke-linecap="round" stroke-linejoin="round"/></svg>
<svg class="a" style="left:3021.0px;top:877.0px;" width="22" height="24" viewBox="0 0 22 24"><path d="M0 4.5 V19.5 A11 4.5 0 0 0 22 19.5 V4.5 Z" fill="#8a8a8a"/><ellipse cx="11" cy="4.5" rx="11" ry="4.5" fill="#8a8a8a"/><path d="M0 9 A11 4.5 0 0 0 22 9" fill="none" stroke="#2e2e2e" stroke-width="2"/></svg>
<div class="a" style="left:2497.8px;top:955.0px;width:61.2px;height:28.0px;background:#5f5337;border-radius:5px;"></div>
<span class="t" style="left:2502.4px;top:959.5px;font-size:19.99px;color:#f3cf58;font-family:'DejaVu Sans','Liberation Sans',sans-serif;letter-spacing:-0.05px;-webkit-text-stroke:0.3px #f3cf58;">Color</span>
<div class="a" style="left:2646.0px;top:937.0px;width:416.2px;height:64.0px;background:#222222;border-radius:9px;"></div>
<svg class="a" style="left:2646px;top:937px;border-radius:9px 0 0 9px;overflow:hidden" width="64" height="64" viewBox="0 0 64 64"><defs><linearGradient id="gsw" x1="0" x2="1" y1="0" y2="0"><stop offset="0" stop-color="#b89c86"/><stop offset="1" stop-color="#b89c86" stop-opacity="0.05"/></linearGradient></defs><rect width="64" height="64" fill="#4a4a4a"/><rect x="0" y="0" width="16" height="16" fill="#3a3a3a"/><rect x="0" y="32" width="16" height="16" fill="#3a3a3a"/><rect x="16" y="16" width="16" height="16" fill="#3a3a3a"/><rect x="16" y="48" width="16" height="16" fill="#3a3a3a"/><rect x="32" y="0" width="16" height="16" fill="#3a3a3a"/><rect x="32" y="32" width="16" height="16" fill="#3a3a3a"/><rect x="48" y="16" width="16" height="16" fill="#3a3a3a"/><rect x="48" y="48" width="16" height="16" fill="#3a3a3a"/><rect width="64" height="64" fill="url(#gsw)"/></svg>
<span class="t" style="left:2843.6px;top:959.6px;font-size:19.99px;color:#fff;font-family:'DejaVu Sans','Liberation Sans',sans-serif;letter-spacing:-0.48px;-webkit-text-stroke:0.3px #fff;">Gradient</span>
<div class="a" style="left:2462.0px;top:1041.0px;width:640.0px;height:0.0px;border-top:2px dotted #6a6a6a;"></div>
<span class="t" style="left:2502.4px;top:1087.0px;font-size:23.4px;color:#fff;font-family:'DejaVu Sans','Liberation Sans',sans-serif;letter-spacing:0.29px;-webkit-text-stroke:0.85px #fff;">Size</span>
<svg class="a" style="left:3032.0px;top:1092.5px;" width="18" height="12" viewBox="0 0 18 12"><path d="M1.5 1.5 L9 9.5 L16.5 1.5" fill="none" stroke="#fff" stroke-width="2.6" stroke-linecap="round" stroke-linejoin="round"/></svg>
<span class="t" style="left:2502.4px;top:1177.5px;font-size:19.99px;color:#a8a8a8;font-family:'DejaVu Sans','Liberation Sans',sans-serif;letter-spacing:-0.52px;-webkit-text-stroke:0.3px #a8a8a8;">Width</span>
<div class="a" style="left:2656.0px;top:1183.0px;width:180.0px;height:8.0px;background:#2f2f2f;border-radius:2.5px;"></div>
<div class="a" style="left:2656.0px;top:1183.0px;width:180.0px;height:8.0px;background:#707070;border-radius:2.5px;"></div>
<div class="a" style="left:2825.7px;top:1176.7px;width:20.6px;height:20.6px;background:#fff;border-radius:50%;box-shadow:0 3px 5px rgba(0,0,0,0.35);"></div>
<div class="a" style="left:2864.2px;top:1155.0px;width:199.8px;height:64.0px;background:#2e2e2e;border-radius:9px;"></div>
<span class="t" style="left:2880.0px;top:1176.5px;font-size:23.4px;color:#fff;font-family:'DejaVu Sans','Liberation Sans',sans-serif;letter-spacing:-0.33px;-webkit-text-stroke:0.85px #fff;">100</span>
<div class="a" style="left:2988.3px;top:1167.0px;width:0.0px;height:40.0px;border-left:2px dashed #4c4c4c;"></div>
<span class="t" style="left:3014.0px;top:1176.5px;font-size:23.4px;color:#7a7a7a;font-family:'DejaVu Sans','Liberation Sans',sans-serif;-webkit-text-stroke:0.85px #7a7a7a;">%</span>
<span class="t" style="left:2502.4px;top:1257.5px;font-size:19.99px;color:#a8a8a8;font-family:'DejaVu Sans','Liberation Sans',sans-serif;letter-spacing:-0.34px;-webkit-text-stroke:0.3px #a8a8a8;">Max Width</span>
<div class="a" style="left:2656.0px;top:1263.0px;width:180.0px;height:8.0px;background:#2f2f2f;border-radius:2.5px;"></div>
<div class="a" style="left:2864.2px;top:1235.0px;width:199.8px;height:64.0px;background:#2e2e2e;border-radius:9px;"></div>
<span class="t" style="left:2880.0px;top:1256.5px;font-size:23.4px;color:#fff;font-family:'DejaVu Sans','Liberation Sans',sans-serif;letter-spacing:0.08px;-webkit-text-stroke:0.85px #fff;">none</span>
<span class="t" style="left:2502.4px;top:1337.5px;font-size:19.99px;color:#a8a8a8;font-family:'DejaVu Sans','Liberation Sans',sans-serif;letter-spacing:-0.49px;-webkit-text-stroke:0.3px #a8a8a8;">Height</span>
<div class="a" style="left:2656.0px;top:1343.0px;width:180.0px;height:8.0px;background:#2f2f2f;border-radius:2.5px;"></div>
<div class="a" style="left:2656.0px;top:1343.0px;width:0.7px;height:8.0px;background:#707070;border-radius:2.5px;"></div>
<div class="a" style="left:2646.4px;top:1336.7px;width:20.6px;height:20.6px;background:#fff;border-radius:50%;box-shadow:0 3px 5px rgba(0,0,0,0.35);"></div>
<div class="a" style="left:2864.2px;top:1315.0px;width:199.8px;height:64.0px;background:#2e2e2e;border-radius:9px;"></div>
<span class="t" style="left:2880.0px;top:1336.5px;font-size:23.4px;color:#fff;font-family:'DejaVu Sans','Liberation Sans',sans-serif;-webkit-text-stroke:0.85px #fff;">3</span>
<div class="a" style="left:2988.3px;top:1327.0px;width:0.0px;height:40.0px;border-left:2px dashed #4c4c4c;"></div>
<span class="t" style="left:3012.4px;top:1336.5px;font-size:22.2px;color:#7a7a7a;font-family:'DejaVu Sans','Liberation Sans',sans-serif;letter-spacing:-0.82px;-webkit-text-stroke:0.85px #7a7a7a;">px</span>
<div class="a" style="left:2462.0px;top:1419.5px;width:640.0px;height:0.0px;border-top:2px dotted #6a6a6a;"></div>
<span class="t" style="left:2502.4px;top:1465.5px;font-size:23.4px;color:#fff;font-family:'DejaVu Sans','Liberation Sans',sans-serif;letter-spacing:0.15px;-webkit-text-stroke:0.85px #fff;">Design</span>
<svg class="a" style="left:3032.0px;top:1471.0px;" width="18" height="12" viewBox="0 0 18 12"><path d="M1.5 1.5 L9 9.5 L16.5 1.5" fill="none" stroke="#fff" stroke-width="2.6" stroke-linecap="round" stroke-linejoin="round"/></svg>
<span class="t" style="left:2502.4px;top:1546.0px;font-size:23.4px;color:#fff;font-family:'DejaVu Sans','Liberation Sans',sans-serif;letter-spacing:0.34px;-webkit-text-stroke:0.85px #fff;">Margin</span>
<div class="a" style="left:2938.0px;top:1537.0px;width:40.0px;height:40.0px;background:#2e2e2e;border-radius:7px;"></div>
<svg class="a" style="left:2946.0px;top:1546.0px;" width="24" height="22" viewBox="0 0 24 22"><rect x="0" y="3" width="3" height="16" rx="1" fill="#777"/><rect x="6" y="0" width="12" height="22" rx="1.5" fill="#777"/><rect x="21" y="3" width="3" height="16" rx="1" fill="#777"/></svg>
<div class="a" style="left:2992.0px;top:1539.0px;width:68.0px;height:36.0px;background:#2e2e2e;border-radius:18px;"></div>
<div class="a" style="left:3029.5px;top:1546.5px;width:21.0px;height:21.0px;background:#3f8bea;border-radius:50%;"></div>
<span class="t" style="left:2502.4px;top:1623.5px;font-size:19.99px;color:#a8a8a8;font-family:'DejaVu Sans','Liberation Sans',sans-serif;letter-spacing:-0.21px;-webkit-text-stroke:0.3px #a8a8a8;">Link Sides</span>
<div class="a" style="left:2646.0px;top:1601.4px;width:416.2px;height:63.4px;background:#2e2e2e;border-radius:9px;"></div>
<div class="a" style="left:2652.0px;top:1607.0px;width:204.0px;height:51.5px;background:#646464;border-radius:5px;box-shadow:0 2px 4px rgba(0,0,0,0.3);"></div>
<svg class="a" style="left:2739.2px;top:1618.0px;" width="30" height="30" viewBox="0 0 30 30"><g transform="translate(15 15) rotate(-45)" fill="none" stroke="#fff" stroke-width="2.9" stroke-linecap="round"><path d="M-2.6 -5.6 H-7.6 A5.6 5.6 0 0 0 -7.6 5.6 H-2.6"/><path d="M2.6 -5.6 H7.6 A5.6 5.6 0 0 1 7.6 5.6 H2.6"/><path d="M-4.4 0 H4.4"/><path d="M0 -10 V-14.2 M0 10 V14.2"/></g></svg>
<svg class="a" style="left:2941.0px;top:1618.0px;" width="30" height="30" viewBox="0 0 30 30"><g transform="translate(15 15) rotate(-45)" fill="none" stroke="#777" stroke-width="2.9" stroke-linecap="round"><path d="M-2.6 -5.6 H-7.6 A5.6 5.6 0 0 0 -7.6 5.6 H-2.6"/><path d="M2.6 -5.6 H7.6 A5.6 5.6 0 0 1 7.6 5.6 H2.6"/><path d="M-4.4 0 H4.4"/></g></svg>
<svg class="a" style="left:2502.0px;top:1697.0px;" width="32" height="32" viewBox="0 0 32 32"><rect x="1" y="1" width="30" height="30" rx="3.4" fill="#343434"/><rect x="1.5" y="1.5" width="29" height="8" fill="#6e4a29"/><line x1="1" y1="9.5" x2="31" y2="9.5" stroke="#eba05a" stroke-width="2"/><rect x="1" y="1" width="30" height="30" rx="3.4" fill="none" stroke="#eba05a" stroke-width="1.9"/></svg>
<span class="t" style="left:2555.3px;top:1703.5px;font-size:19.99px;color:#a8a8a8;font-family:'DejaVu Sans','Liberation Sans',sans-serif;letter-spacing:0.33px;-webkit-text-stroke:0.3px #a8a8a8;">Top</span>
<div class="a" style="left:2656.0px;top:1709.0px;width:180.0px;height:8.0px;background:#2f2f2f;border-radius:2.5px;"></div>
<div class="a" style="left:2656.0px;top:1709.0px;width:89.9px;height:8.0px;background:#707070;border-radius:2.5px;"></div>
<div class="a" style="left:2735.6px;top:1702.7px;width:20.6px;height:20.6px;background:#fff;border-radius:50%;box-shadow:0 3px 5px rgba(0,0,0,0.35);"></div>
<div class="a" style="left:2864.2px;top:1681.0px;width:199.8px;height:64.0px;background:#2e2e2e;border-radius:9px;"></div>
<span class="t" style="left:2880.0px;top:1702.5px;font-size:23.4px;color:#fff;font-family:'DejaVu Sans','Liberation Sans',sans-serif;-webkit-text-stroke:0.85px #fff;">0</span>
<div class="a" style="left:2988.3px;top:1693.0px;width:0.0px;height:40.0px;border-left:2px dashed #4c4c4c;"></div>
<span class="t" style="left:3008.0px;top:1702.5px;font-size:22.2px;color:#7a7a7a;font-family:'DejaVu Sans','Liberation Sans',sans-serif;letter-spacing:0.13px;-webkit-text-stroke:0.85px #7a7a7a;">em</span>
<svg class="a" style="left:2502.0px;top:1777.0px;" width="32" height="32" viewBox="0 0 32 32"><rect x="1" y="1" width="30" height="30" rx="3.4" fill="#343434"/><rect x="22.5" y="1.5" width="8" height="29" fill="#6e4a29"/><line x1="22.5" y1="1" x2="22.5" y2="31" stroke="#eba05a" stroke-width="2"/><rect x="1" y="1" width="30" height="30" rx="3.4" fill="none" stroke="#eba05a" stroke-width="1.9"/></svg>
<span class="t" style="left:2555.3px;top:1783.5px;font-size:19.99px;color:#a8a8a8;font-family:'DejaVu Sans','Liberation Sans',sans-serif;letter-spacing:-0.66px;-webkit-text-stroke:0.3px #a8a8a8;">Right</span>
<div class="a" style="left:2656.0px;top:1789.0px;width:180.0px;height:8.0px;background:#2f2f2f;border-radius:2.5px;"></div>
<div class="a" style="left:2656.0px;top:1789.0px;width:89.9px;height:8.0px;background:#707070;border-radius:2.5px;"></div>
<div class="a" style="left:2735.6px;top:1782.7px;width:20.6px;height:20.6px;background:#fff;border-radius:50%;box-shadow:0 3px 5px rgba(0,0,0,0.35);"></div>
<div class="a" style="left:2864.2px;top:1761.0px;width:199.8px;height:64.0px;background:#2e2e2e;border-radius:9px;"></div>
<span class="t" style="left:2880.0px;top:1782.5px;font-size:23.4px;color:#fff;font-family:'DejaVu Sans','Liberation Sans',sans-serif;-webkit-text-stroke:0.85px #fff;">0</span>
<div class="a" style="left:2988.3px;top:1773.0px;width:0.0px;height:40.0px;border-left:2px dashed #4c4c4c;"></div>
<span class="t" style="left:3012.4px;top:1782.5px;font-size:22.2px;color:#7a7a7a;font-family:'DejaVu Sans','Liberation Sans',sans-serif;letter-spacing:-0.82px;-webkit-text-stroke:0.85px #7a7a7a;">px</span>
<svg class="a" style="left:2502.0px;top:1857.0px;" width="32" height="32" viewBox="0 0 32 32"><rect x="1" y="1" width="30" height="30" rx="3.4" fill="#343434"/><rect x="1.5" y="22.5" width="29" height="8" fill="#6e4a29"/><line x1="1" y1="22.5" x2="31" y2="22.5" stroke="#eba05a" stroke-width="2"/><rect x="1" y="1" width="30" height="30" rx="3.4" fill="none" stroke="#eba05a" stroke-width="1.9"/></svg>
<span class="t" style="left:2555.3px;top:1863.5px;font-size:19.99px;color:#a8a8a8;font-family:'DejaVu Sans','Liberation Sans',sans-serif;letter-spacing:-1.12px;-webkit-text-stroke:0.3px #a8a8a8;">Bttm</span>
<div class="a" style="left:2656.0px;top:1869.0px;width:180.0px;height:8.0px;background:#2f2f2f;border-radius:2.5px;"></div>
<div class="a" style="left:2656.0px;top:1869.0px;width:89.9px;height:8.0px;background:#707070;border-radius:2.5px;"></div>
<div class="a" style="left:2735.6px;top:1862.7px;width:20.6px;height:20.6px;background:#fff;border-radius:50%;box-shadow:0 3px 5px rgba(0,0,0,0.35);"></div>
<div class="a" style="left:2864.2px;top:1841.0px;width:199.8px;height:64.0px;background:#2e2e2e;border-radius:9px;"></div>
<span class="t" style="left:2880.0px;top:1862.5px;font-size:23.4px;color:#fff;font-family:'DejaVu Sans','Liberation Sans',sans-serif;-webkit-text-stroke:0.85px #fff;">0</span>
<div class="a" style="left:2988.3px;top:1853.0px;width:0.0px;height:40.0px;border-left:2px dashed #4c4c4c;"></div>
<span class="t" style="left:3008.0px;top:1862.5px;font-size:22.2px;color:#7a7a7a;font-family:'DejaVu Sans','Liberation Sans',sans-serif;letter-spacing:0.13px;-webkit-text-stroke:0.85px #7a7a7a;">em</span>
<svg class="a" style="left:2502.0px;top:1937.0px;" width="32" height="32" viewBox="0 0 32 32"><rect x="1" y="1" width="30" height="30" rx="3.4" fill="#343434"/><rect x="1.5" y="1.5" width="8" height="29" fill="#6e4a29"/><line x1="9.5" y1="1" x2="9.5" y2="31" stroke="#eba05a" stroke-width="2"/><rect x="1" y="1" width="30" height="30" rx="3.4" fill="none" stroke="#eba05a" stroke-width="1.9"/></svg>
<span class="t" style="left:2555.3px;top:1943.5px;font-size:19.99px;color:#a8a8a8;font-family:'DejaVu Sans','Liberation Sans',sans-serif;letter-spacing:-0.24px;-webkit-text-stroke:0.3px #a8a8a8;">Left</span>
<div class="a" style="left:2656.0px;top:1949.0px;width:180.0px;height:8.0px;background:#2f2f2f;border-radius:2.5px;"></div>
<div class="a" style="left:2656.0px;top:1949.0px;width:89.9px;height:8.0px;background:#707070;border-radius:2.5px;"></div>
<div class="a" style="left:2735.6px;top:1942.7px;width:20.6px;height:20.6px;background:#fff;border-radius:50%;box-shadow:0 3px 5px rgba(0,0,0,0.35);"></div>
<div class="a" style="left:2864.2px;top:1921.0px;width:199.8px;height:64.0px;background:#2e2e2e;border-radius:9px;"></div>
<span class="t" style="left:2880.0px;top:1942.5px;font-size:23.4px;color:#fff;font-family:'DejaVu Sans','Liberation Sans',sans-serif;-webkit-text-stroke:0.85px #fff;">0</span>
<div class="a" style="left:2988.3px;top:1933.0px;width:0.0px;height:40.0px;border-left:2px dashed #4c4c4c;"></div>
<span class="t" style="left:3012.4px;top:1942.5px;font-size:22.2px;color:#7a7a7a;font-family:'DejaVu Sans','Liberation Sans',sans-serif;letter-spacing:-0.82px;-webkit-text-stroke:0.85px #7a7a7a;">px</span>
<span class="t" style="left:2502.4px;top:2078.0px;font-size:23.4px;color:#9c9c9c;font-family:'DejaVu Sans','Liberation Sans',sans-serif;letter-spacing:0.36px;-webkit-text-stroke:0.85px #9c9c9c;">Border Radius</span>
<span class="t" style="left:2502.4px;top:2166.0px;font-size:23.4px;color:#9c9c9c;font-family:'DejaVu Sans','Liberation Sans',sans-serif;letter-spacing:0.15px;-webkit-text-stroke:0.85px #9c9c9c;">Box Shadow</span>
<div class="a" style="left:2992.0px;top:2071.0px;width:68.0px;height:36.0px;background:#2e2e2e;border-radius:18px;"></div>
<div class="a" style="left:3002.0px;top:2079.0px;width:20.0px;height:20.0px;background:#6e6e6e;border-radius:50%;"></div>
<div class="a" style="left:2992.0px;top:2159.0px;width:68.0px;height:36.0px;background:#2e2e2e;border-radius:18px;"></div>
<div class="a" style="left:3002.0px;top:2167.0px;width:20.0px;height:20.0px;background:#6e6e6e;border-radius:50%;"></div>
</div></div>
<div id="edge"></div><div id="edge2"></div>
</body></html>
